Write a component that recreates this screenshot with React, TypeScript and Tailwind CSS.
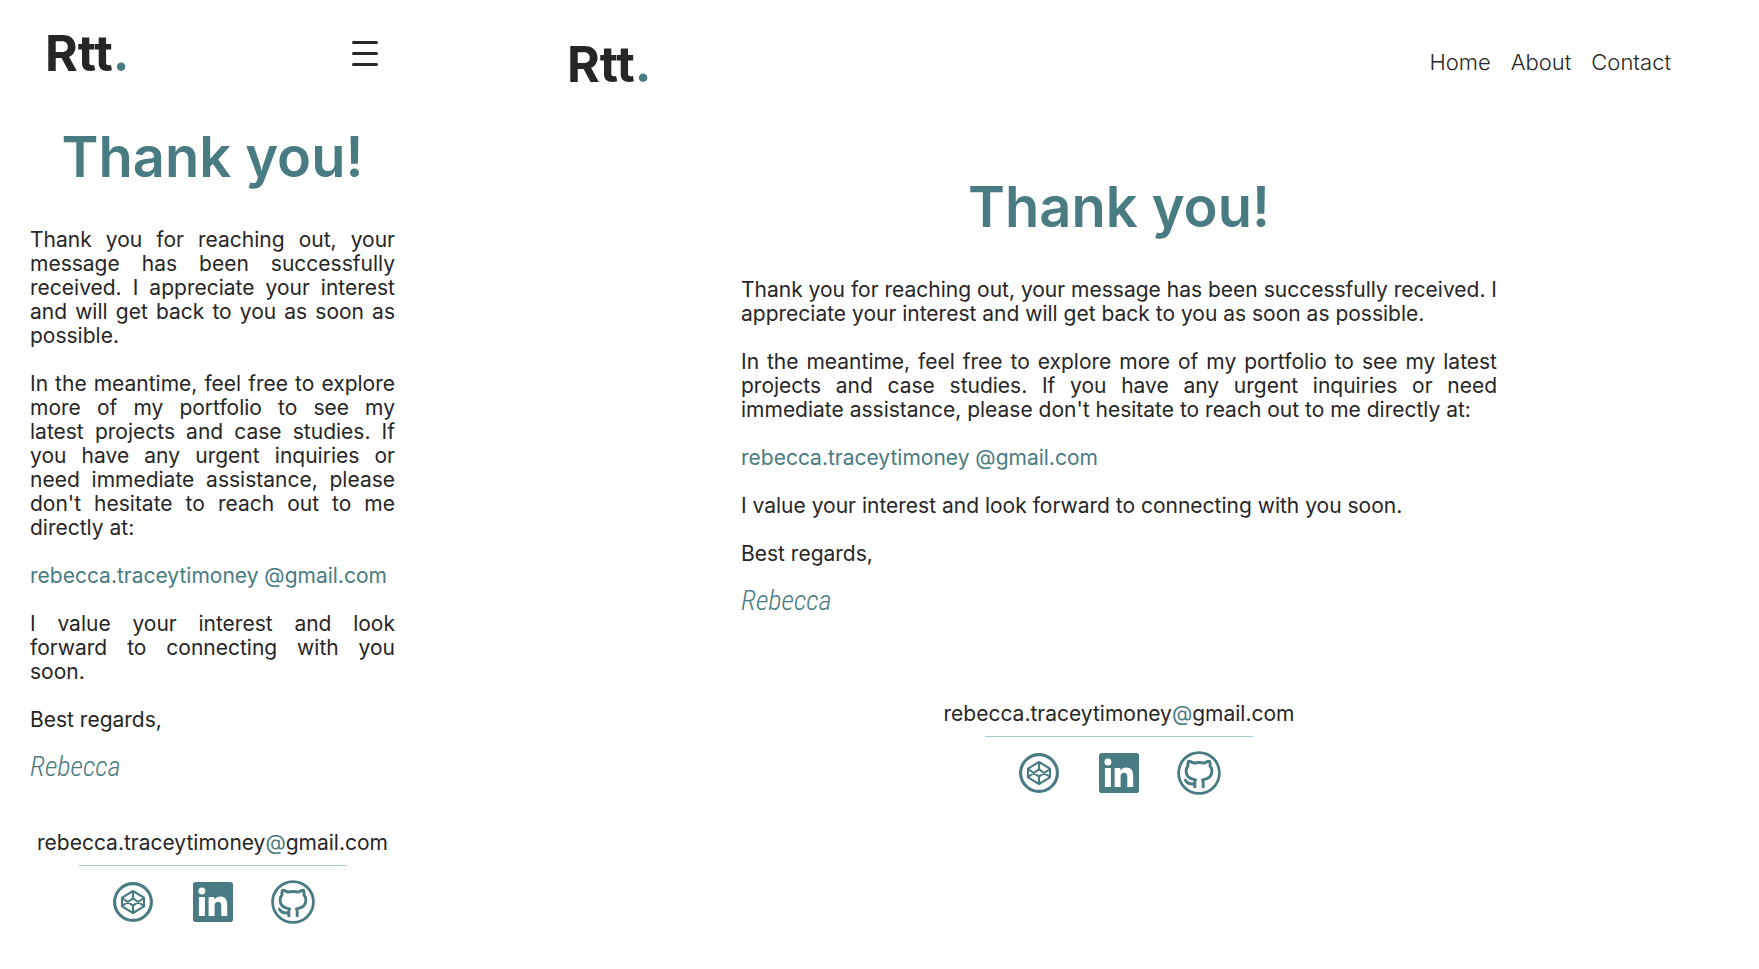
type Layout = "mobile" | "desktop";

const EMAIL_HREF = "mailto:rebecca.traceytimoney@gmail.com";

function Logo() {
  return (
    <a href="#home" className="text-[50px] leading-[50px] font-bold text-[#262626]">
      Rtt<span className="text-[#497b82]">.</span>
    </a>
  );
}

function MenuButton() {
  return (
    <button type="button" aria-label="Menu" className="flex w-[26px] flex-col gap-2">
      <span className="h-[3px] w-full rounded-full bg-[#262626]" />
      <span className="h-[3px] w-full rounded-full bg-[#262626]" />
      <span className="h-[3px] w-full rounded-full bg-[#262626]" />
    </button>
  );
}

function Nav() {
  return (
    <nav className="mb-1 flex gap-5 text-[22px] leading-6 font-light">
      <a href="#home">Home</a>
      <a href="#about">About</a>
      <a href="#contact">Contact</a>
    </nav>
  );
}

function CodepenIcon() {
  return (
    <svg viewBox="0 0 40 40" className="size-10" fill="none" stroke="currentColor" strokeLinejoin="round">
      <circle cx="20" cy="20" r="18.4" strokeWidth="3.1" />
      <g strokeWidth="2.1">
        <path d="M20 9 31 15.6v8.8L20 31 9 24.4v-8.8Z" />
        <path d="M20 9v7.4M20 23.6V31" />
        <path d="M9 16 20 23.6 31 16M9 24 20 16.4 31 24" />
      </g>
    </svg>
  );
}

function LinkedinIcon() {
  return (
    <svg viewBox="0 0 40 40" className="size-10">
      <rect width="40" height="40" rx="2.8" fill="currentColor" />
      <g fill="#fff">
        <circle cx="8.9" cy="9" r="3.5" />
        <path d="M5.9 15h6v19.1h-6zM15.6 15h5.7v2.6h.1c.8-1.5 2.8-3.1 5.7-3.1 6 0 7.1 4 7.1 9.1v10.5h-5.9v-9.3c0-2.2-.1-5.1-3.1-5.1-3.1 0-3.6 2.4-3.6 4.9v9.5h-6z" />
      </g>
    </svg>
  );
}

function GithubIcon() {
  return (
    <svg viewBox="0 0 44 44" className="size-11" fill="none" stroke="currentColor" strokeLinejoin="round">
      <circle cx="22" cy="22" r="20.4" strokeWidth="2.8" />
      <g strokeWidth="2.9">
        <path d="M17.8 37v-5.4c0-1.5.3-2.1.8-2.7-5.5-.7-9.5-2.8-9.5-8.9 0-2 .7-3.7 1.9-5-.3-1.3-.2-3 .5-4.8 2 0 3.6.9 5.2 1.9 3.3-.7 7.3-.7 10.6 0 1.6-1 3.2-1.9 5.2-1.9.7 1.8.8 3.5.5 4.8 1.2 1.3 1.9 3 1.9 5 0 6.1-4 8.2-9.500 8.900.5.6.8 1.200.8 2.700V37" />
        <path d="M17.800 32.800c-5.300.6-6.800-.3-8-1.900-.8-1.100-1.300-1.800-2.600-2" />
      </g>
    </svg>
  );
}

function Footer() {
  return (
    <footer className="flex flex-col items-center">
      <a href={EMAIL_HREF} className="text-[21px] leading-6 text-[#262626]">
        rebecca.traceytimoney<span className="text-[#497b82]">@</span>gmail.com
      </a>
      <hr className="mt-2.5 w-[268px] border-[#a9cbcf]" />
      <div className="mt-3.5 flex h-11 items-center text-[#497b82]">
        <a href="#codepen" aria-label="CodePen" className="flex w-20 justify-center"><CodepenIcon /></a>
        <a href="#linkedin" aria-label="LinkedIn" className="flex w-20 justify-center"><LinkedinIcon /></a>
        <a href="#github" aria-label="GitHub" className="flex w-20 justify-center"><GithubIcon /></a>
      </div>
    </footer>
  );
}

function Message({ layout }: { layout: Layout }) {
  // In the narrow column some word pairs stay together on one line.
  const tie = layout === "mobile" ? "\u00a0" : " ";
  const paragraphs = [
    "Thank you for reaching out, your message has been successfully received. I appreciate your interest and will get back to you as soon as possible.",
    `In the meantime, feel free to explore more of my portfolio to see my latest${tie}projects and case studies. If you${tie}have any urgent inquiries or need${tie}immediate assistance, please don't${tie}hesitate to reach out to me directly${tie}at:`,
  ];
  const closing = `I value your interest and look forward${tie}to connecting with you soon.`;
  return (
    <article className="w-full">
      <h1 className="text-center text-[56px] leading-[68px] font-semibold text-[#497b82]">Thank you!</h1>
      <div className="mt-[37px] flex flex-col gap-6 text-justify text-[21px] leading-6">
        {paragraphs.map((text) => (
          <p key={text}>{text}</p>
        ))}
        <p>
          <a href={EMAIL_HREF} className="whitespace-nowrap text-[#497b82]">rebecca.traceytimoney @gmail.com</a>
        </p>
        <p>{closing}</p>
        <p>Best regards,</p>
      </div>
      <p className="mt-[15px] font-['Roboto_Condensed',sans-serif] text-[28px] leading-[40px] font-light text-[#497b82] italic">
        Rebecca
      </p>
    </article>
  );
}

function Page({ layout }: { layout: Layout }) {
  if (layout === "mobile") {
    return (
      <section className="w-[425px] shrink-0">
        <header className="flex items-center justify-between pt-7 pr-[47px] pl-[45px]">
          <Logo />
          <MenuButton />
        </header>
        <main className="px-[30px] pt-[45px] pb-11">
          <Message layout={layout} />
        </main>
        <Footer />
      </section>
    );
  }
  return (
    <section className="min-w-0 flex-1">
      <header className="flex items-center justify-between px-[88px] pt-[39px]">
        <Logo />
        <Nav />
      </header>
      <main className="mx-auto max-w-[756px] pt-[84px] pb-[81px]">
        <Message layout={layout} />
      </main>
      <Footer />
    </section>
  );
}

export default function App() {
  return (
    <div className="flex min-h-screen gap-[54px] bg-white font-[Inter,sans-serif] text-[#262626]">
      <Page layout="mobile" />
      <Page layout="desktop" />
    </div>
  );
}
